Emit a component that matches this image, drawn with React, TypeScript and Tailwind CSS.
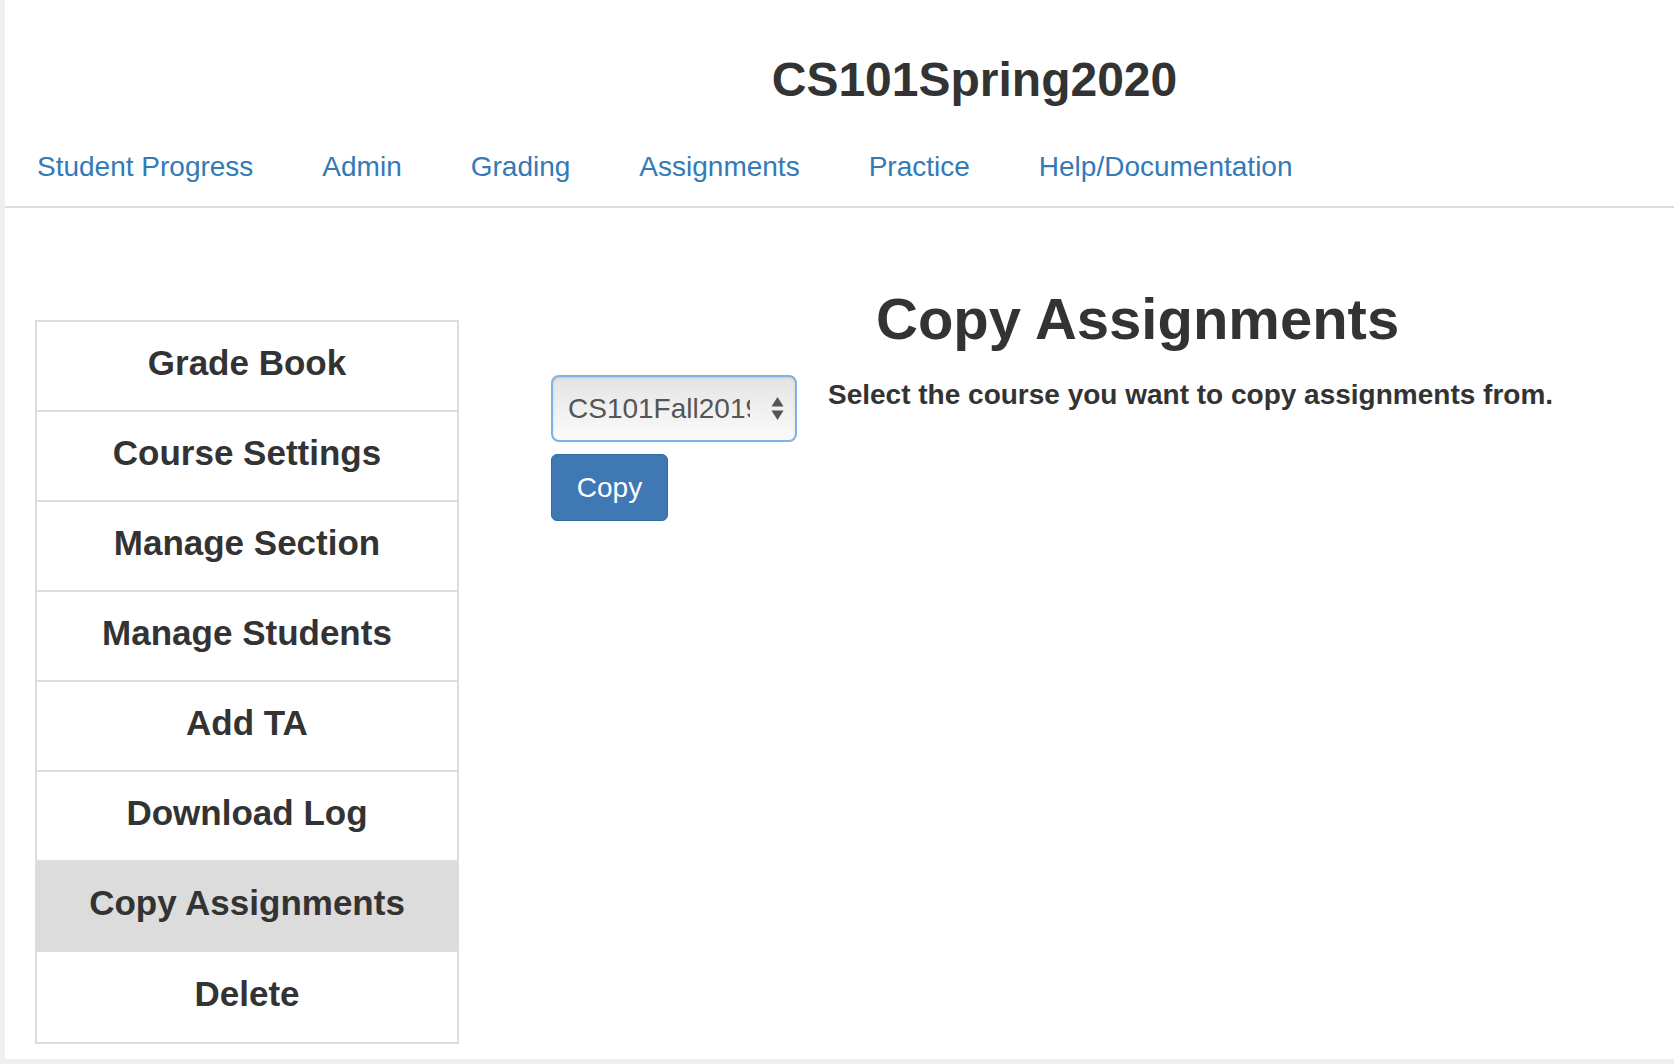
import React from "react";

const navLinks = ["Student Progress", "Admin", "Grading", "Assignments", "Practice", "Help/Documentation"];

const menuItems = [
    "Grade Book",
    "Course Settings",
    "Manage Section",
    "Manage Students",
    "Add TA",
    "Download Log",
    "Copy Assignments",
    "Delete",
];

function SideMenu({ active }: { active: string }) {
    return (
        <div className="ml-[30px] mt-[30px] flex w-[424px] flex-col border-2 border-[#dddddd] divide-y-2 divide-[#dddddd]">
            {menuItems.map((item) => (
                <a
                    key={item}
                    href="#"
                    className={
                        item === active
                            ? "flex h-[90px] items-center justify-center bg-[#dcdcdc] pb-[5px] text-[35px] font-bold text-[#333333]"
                            : "flex h-[90px] items-center justify-center bg-white pb-[5px] text-[35px] font-bold text-[#333333]"
                    }
                >
                    {item}
                </a>
            ))}
        </div>
    );
}

function CourseSelect() {
    return (
        <div className="relative flex h-[67px] w-[246px] items-center rounded-[8px] border-2 border-[#7eb2e4] bg-linear-to-b from-[#e4e4e4] to-[#fbfbfb] shadow-[inset_0_1px_3px_rgba(0,0,0,0.12)]">
            <div className="ml-[15px] w-[182px] overflow-hidden whitespace-nowrap text-[28px] leading-none text-[#555555]">
                CS101Fall2019
            </div>
            <svg className="absolute left-[218px] top-[19px]" width="13" height="25" viewBox="0 0 13 25">
                <path d="M6.5 1 L12.5 10.5 L0.5 10.5 Z" fill="#555555" />
                <path d="M6.5 24 L12.5 14.5 L0.5 14.5 Z" fill="#555555" />
            </svg>
        </div>
    );
}

export default function App() {
    return (
        <div
            className="min-h-screen bg-[#efefef] pl-[5px]"
            style={{ fontFamily: '"Liberation Sans", Arial, sans-serif' }}
        >
            <div className="h-[1059px] bg-white">
                <header className="border-b-2 border-[#dddddd]">
                    <h1 className="pl-[270px] pt-[56px] text-center text-[48px] font-bold leading-none text-[#333333]">
                        CS101Spring2020
                    </h1>
                    <nav className="mt-[49px] flex gap-[69px] pb-[25px] pl-[32px]">
                        {navLinks.map((link) => (
                            <a key={link} href="#" className="text-[28px] leading-none text-[#337ab7]">
                                {link}
                            </a>
                        ))}
                    </nav>
                </header>

                <div className="flex items-start pt-[82px]">
                    <SideMenu active="Copy Assignments" />

                    <div className="ml-[92px] mt-[85px] flex flex-col gap-[12px]">
                        <CourseSelect />
                        <button className="h-[67px] w-[117px] rounded-[6px] border border-[#2e6da4] bg-[#3f78b4] text-[28px] leading-none text-white">
                            Copy
                        </button>
                    </div>

                    <div className="ml-[31px] flex flex-col">
                        <h2 className="pl-[48px] text-[58px] font-bold leading-none text-[#333333]">
                            Copy Assignments
                        </h2>
                        <p className="mt-[33px] text-[28px] font-bold leading-none text-[#333333]">
                            Select the course you want to copy assignments from.
                        </p>
                    </div>
                </div>
            </div>
        </div>
    );
}
